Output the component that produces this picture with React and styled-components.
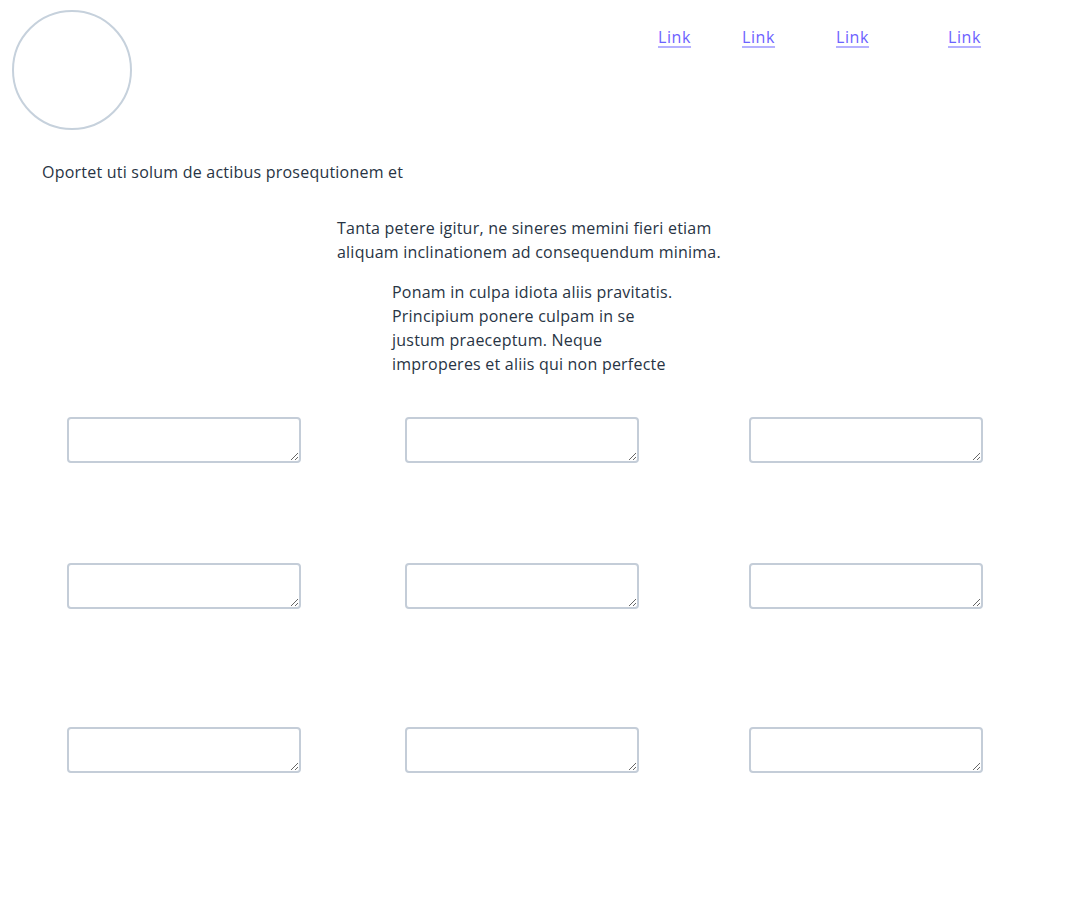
import React from "react";
import styled, { createGlobalStyle } from "styled-components";

const Global = createGlobalStyle`
  html, body { margin: 0; padding: 0; background: #fff; }
  body {
    font-family: "Open Sans", "Noto Sans", sans-serif;
    font-size: 16px;
    line-height: 24px;
    letter-spacing: 0.22px;
    color: #283444;
  }
`;

const Page = styled.div`
  width: 1080px;
  min-height: 924px;
  display: flex;
  flex-direction: column;
`;

const Header = styled.header`
  display: flex;
  align-items: flex-start;
  padding: 10px 0 0 12px;
`;

const Logo = styled.div`
  width: 116px;
  height: 116px;
  border: 2px solid #c6d1dc;
  border-radius: 50%;
  flex: none;
`;

const Nav = styled.nav`
  display: flex;
  margin-left: 526px;
  padding-top: 15px;
`;

const NavItem = styled.div`
  flex: none;
  width: ${(p) => p.$width}px;
`;

const NavLink = styled.a`
  color: #6c63ff;
  text-decoration: underline;
  text-decoration-color: rgba(108, 99, 255, 0.5);
  text-underline-offset: 3px;
  text-decoration-thickness: 2px;
  letter-spacing: 0.6px;
  line-height: 24px;
`;

const Text = styled.p`
  margin: ${(p) => p.$top}px 0 0 ${(p) => p.$left}px;
  line-height: 24px;
`;

const Grid = styled.div`
  display: grid;
  grid-template-columns: 234px 234px 234px;
  column-gap: 104px;
  margin: 41px 0 0 67px;
`;

const Row = styled.div`
  display: contents;
`;

const Field = styled.textarea`
  box-sizing: border-box;
  width: 234px;
  height: 46px;
  border: 2px solid #c4cdd8;
  border-radius: 4px;
  margin: 0 0 ${(p) => p.$bottom}px ${(p) => p.$shift || 0}px;
  font-family: inherit;
  resize: vertical;
`;

const links = [84, 94, 112, 40];
const rowGaps = [100, 118, 0];

export default function App() {
  return (
    <Page>
      <Global />
      <Header>
        <Logo />
        <Nav>
          {links.map((w, i) => (
            <NavItem key={i} $width={w}>
              <NavLink href="#">Link</NavLink>
            </NavItem>
          ))}
        </Nav>
      </Header>
      <Text $top={30} $left={42}>Oportet uti solum de actibus prosequtionem et</Text>
      <Text $top={32} $left={337}>
        Tanta petere igitur, ne sineres memini fieri etiam<br />
        aliquam inclinationem ad consequendum minima.
      </Text>
      <Text $top={16} $left={392}>
        Ponam in culpa idiota aliis pravitatis.<br />
        Principium ponere culpam in se<br />
        justum praeceptum. Neque<br />
        improperes et aliis qui non perfecte
      </Text>
      <Grid>
        {rowGaps.map((g, r) => (
          <Row key={r}>
            <Field $bottom={g} />
            <Field $bottom={g} />
            <Field $bottom={g} $shift={6} />
          </Row>
        ))}
      </Grid>
    </Page>
  );
}
